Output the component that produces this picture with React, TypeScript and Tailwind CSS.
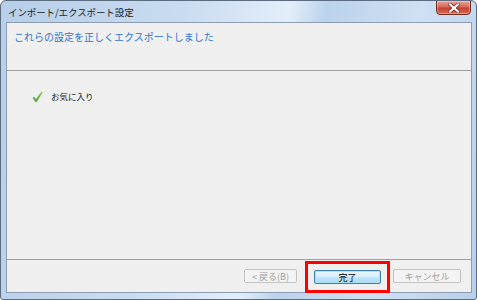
import React from "react";

export default function App() {
  const font = { fontFamily: '"Noto Sans CJK JP", "Noto Sans", sans-serif' };
  return (
    <div
      className="w-[477px] h-[300px] flex flex-col rounded-t-[6px] rounded-b-[3px] border border-[#5b6b80] bg-[linear-gradient(100deg,#b7cfe9_0%,#c9dcf1_35%,#e3eefa_55%,#bcd3ec_62%,#cfe0f3_80%,#b8d0ea_100%)] overflow-hidden"
      style={font}
    >
      {/* Title bar */}
      <div className="h-[21px] flex items-start justify-between pl-[7px] pr-[5px]">
        <div className="text-[9.5px] leading-none text-[#1b1b1b] pt-[7px] tracking-[-0.1px]">
          インポート/エクスポート設定
        </div>
        <div className="w-[35px] h-[15px] -mt-[1px] rounded-b-[4px] border border-[#6f2a22] bg-[linear-gradient(180deg,#e9a396_0%,#d8685a_45%,#c6402f_55%,#d56a55_100%)] flex items-center justify-center shadow-[inset_0_0_0_1px_rgba(255,255,255,0.35)]">
          <svg width="12" height="10" viewBox="0 0 12 10">
            <path d="M2 1.5 L10 8.5 M10 1.5 L2 8.5" stroke="#5a1a12" strokeWidth="3.4" strokeLinecap="square" />
            <path d="M2 1.5 L10 8.5 M10 1.5 L2 8.5" stroke="#ffffff" strokeWidth="2.2" strokeLinecap="square" />
          </svg>
        </div>
      </div>

      {/* Client area */}
      <div className="flex-1 ml-[5px] mr-[4px] mb-[6px] border border-[#8c9db3] bg-[#f0f0f0] flex flex-col">
        {/* Header */}
        <div className="h-[48px] border-b border-[#a0a0a0] pl-[7px] pt-[8px]">
          <div className="text-[10px] leading-[12px] text-[#2f74d0]">
            これらの設定を正しくエクスポートしました
          </div>
        </div>

        {/* Content */}
        <div className="flex-1 border-b border-[#a0a0a0] pl-[25px] pt-[20px]">
          <div className="flex items-center gap-[8px]">
            <svg width="11" height="12" viewBox="0 0 11 12">
              <defs>
                <linearGradient id="g" x1="0" y1="0" x2="0" y2="1">
                  <stop offset="0" stopColor="#8fd46a" />
                  <stop offset="1" stopColor="#3f9a2a" />
                </linearGradient>
              </defs>
              <path d="M0.5 7 L2 5.6 L4 8 L9.5 0.5 L10.8 1.5 L4.2 11.5 Z" fill="url(#g)" />
            </svg>
            <span className="text-[8.5px] leading-none text-[#1a1a1a] -mt-[2px]">お気に入り</span>
          </div>
        </div>

        {/* Footer */}
        <div className="h-[32px] flex items-center justify-end pr-[10px]">
          <div className="w-[53px] h-[14px] rounded-[2px] border border-[#c3c3c3] bg-[#f4f4f4] flex items-center justify-center text-[9px] leading-none text-[#a0a0a0]">
            &lt; 戻る(B)
          </div>
          <div className="ml-[8px] mt-[2px] border-[3px] border-[#ff0000] px-[6px] py-[6px]">
            <div className="w-[67px] h-[14px] rounded-[2px] border border-[#3c7fb1] bg-[linear-gradient(180deg,#eaf6fd_0%,#d9f0fc_45%,#bee6fd_55%,#a7d9f5_100%)] shadow-[inset_0_0_0_1px_#aee0f8] flex items-center justify-center text-[9px] leading-none text-[#000]">
              完了
            </div>
          </div>
          <div className="ml-[3px] w-[68px] h-[14px] rounded-[2px] border border-[#c3c3c3] bg-[#f4f4f4] flex items-center justify-center text-[9px] leading-none text-[#a0a0a0]">
            キャンセル
          </div>
        </div>
      </div>
    </div>
  );
}
